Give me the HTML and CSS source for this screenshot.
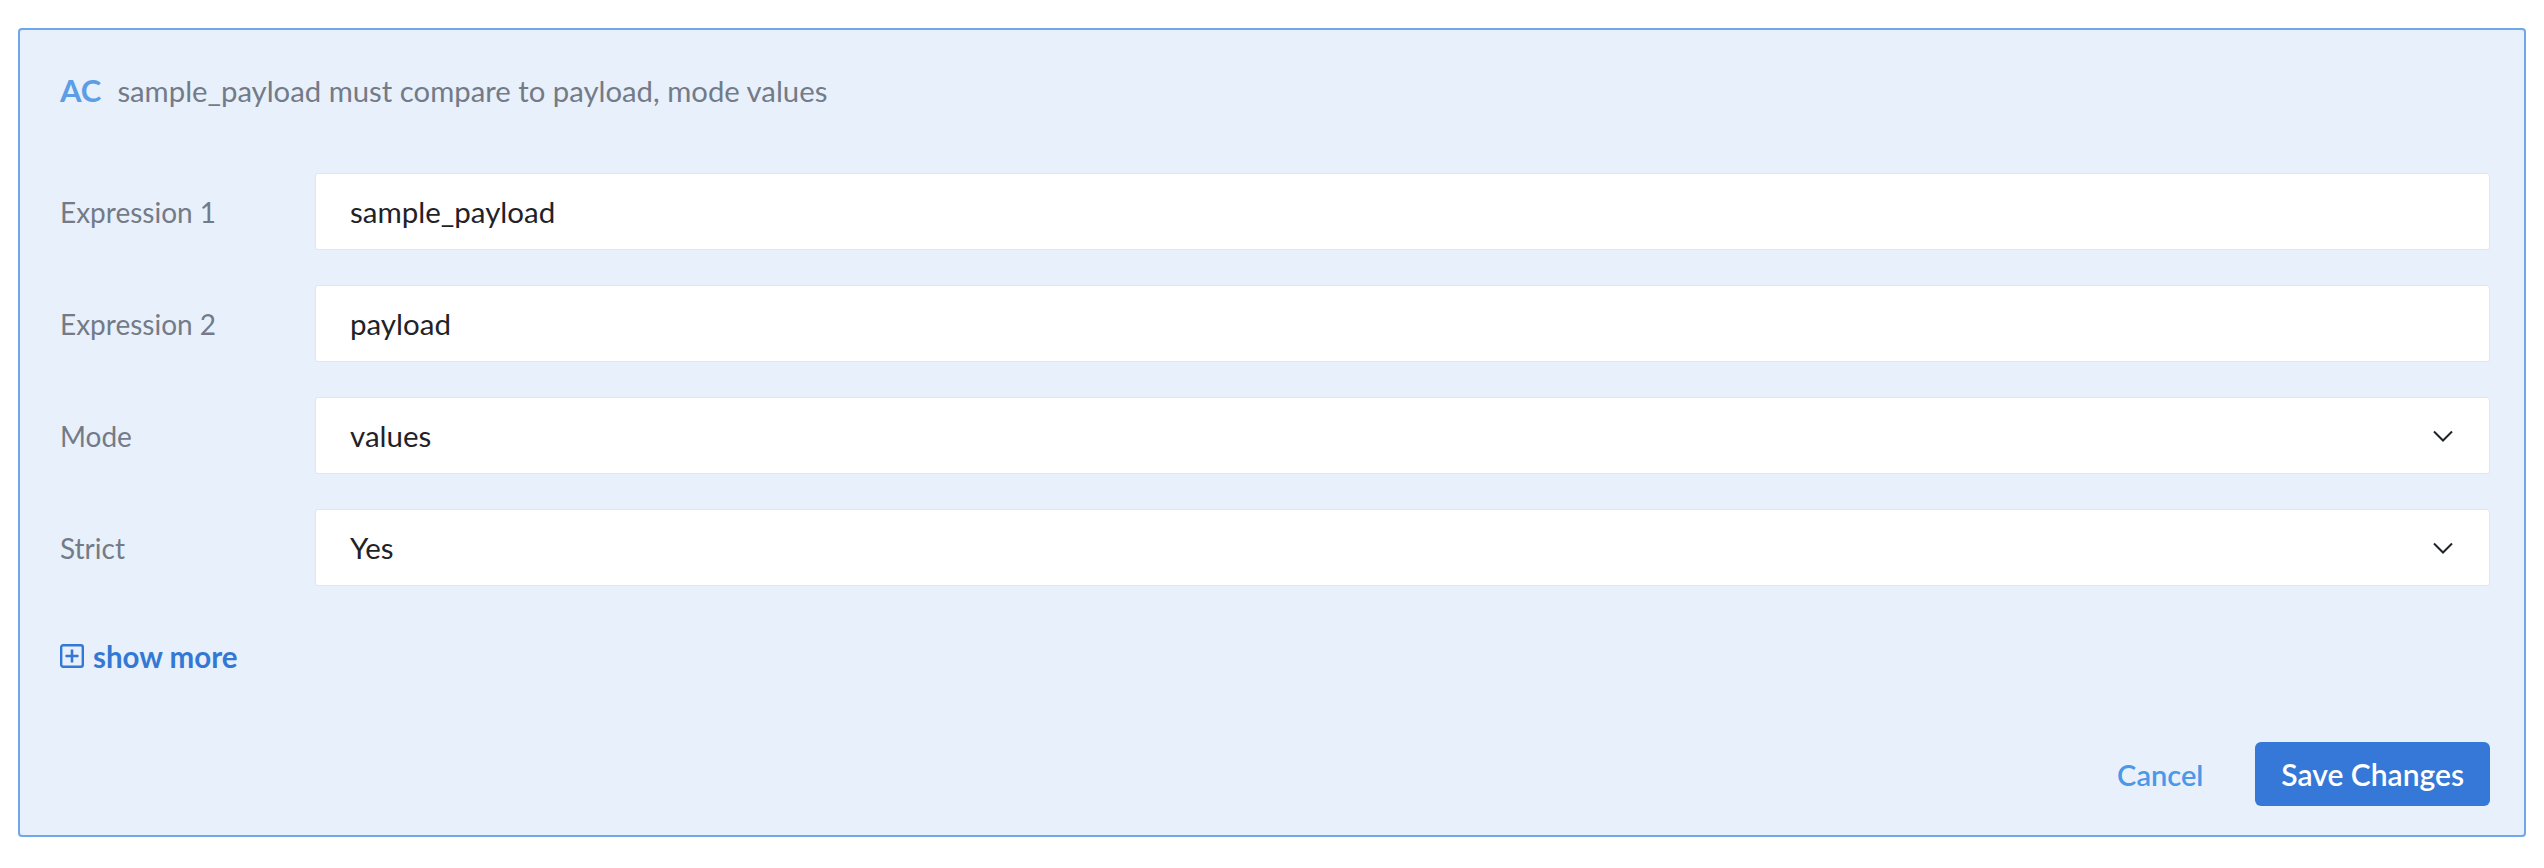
FILE: index.html
```html
<!DOCTYPE html>
<html lang="en">
<head>
    <meta charset="UTF-8">
    <meta name="viewport" content="width=device-width, initial-scale=1.0">
    <title>Assertion - Compare</title>
    <link rel="stylesheet" href="styles.css">
</head>
<body>
    <div class="assertion-panel">
        <div class="assertion-header">
            <span class="assertion-code">AC</span>
            <span class="assertion-summary">sample_payload must compare to payload, mode values</span>
        </div>

        <div class="form-rows">
            <div class="form-row">
                <label class="form-label" for="expr-1">Expression 1</label>
                <input class="form-field" id="expr-1" type="text" value="sample_payload">
            </div>
            <div class="form-row">
                <label class="form-label" for="expr-2">Expression 2</label>
                <input class="form-field" id="expr-2" type="text" value="payload">
            </div>
            <div class="form-row">
                <span class="form-label">Mode</span>
                <div class="form-field select-field">
                    <span>values</span>
                    <svg class="chevron" width="20" height="12" viewBox="0 0 20 12"><path d="M1 1.5l9 9 9-9" fill="none" stroke="#1f2328" stroke-width="2"/></svg>
                </div>
            </div>
            <div class="form-row">
                <span class="form-label">Strict</span>
                <div class="form-field select-field">
                    <span>Yes</span>
                    <svg class="chevron" width="20" height="12" viewBox="0 0 20 12"><path d="M1 1.5l9 9 9-9" fill="none" stroke="#1f2328" stroke-width="2"/></svg>
                </div>
            </div>
        </div>

        <a class="show-more" href="#">
            <svg class="plus-box" width="24" height="24" viewBox="0 0 24 24"><rect x="1.2" y="1.2" width="21.6" height="21.6" rx="2" fill="none" stroke="#3478d6" stroke-width="2.4"/><path d="M12 5.5v13M5.5 12h13" stroke="#3478d6" stroke-width="2.6"/></svg>
            show more
        </a>

        <div class="panel-actions">
            <button class="btn-link" type="button">Cancel</button>
            <button class="btn-primary" type="button">Save Changes</button>
        </div>
    </div>
</body>
</html>
```

FILE: styles.css
```css
body {
    font-family: Lato, "Liberation Sans", sans-serif;
    background-color: #ffffff;
    margin: 0;
    padding: 28px 18px 0;
}
.assertion-panel {
    background-color: #e8f0fb;
    border: 2px solid #6ea7ea;
    border-radius: 4px;
    padding: 40px 34px 29px 40px;
}
.assertion-header {
    display: flex;
    align-items: baseline;
    gap: 16px;
    height: 40px;
    line-height: 40px;
}
.assertion-code {
    font-size: 31px;
    font-weight: 700;
    color: #5b9ee6;
}
.assertion-summary {
    font-size: 29.3px;
    color: #737b88;
}
.form-rows {
    display: flex;
    flex-direction: column;
    gap: 35px;
    margin-top: 63px;
}
.form-row {
    display: flex;
    align-items: center;
}
.form-label {
    flex: 0 0 255px;
    font-size: 28px;
    color: #737b88;
}
.form-field {
    flex: 1;
    box-sizing: border-box;
    height: 77px;
    padding: 0 36px 0 34px;
    background-color: #ffffff;
    border: 1px solid #e1e5ec;
    border-radius: 3px;
    font-family: inherit;
    font-size: 29.5px;
    color: #1f2328;
    outline: none;
}
.select-field {
    display: flex;
    align-items: center;
    justify-content: space-between;
}
.show-more {
    display: flex;
    align-items: center;
    gap: 9px;
    width: max-content;
    margin-top: 58px;
    height: 24px;
    font-size: 29.5px;
    font-weight: 700;
    color: #3478d6;
    text-decoration: none;
}
.panel-actions {
    display: flex;
    justify-content: flex-end;
    align-items: center;
    gap: 52px;
    margin-top: 74px;
}
.btn-link {
    background: none;
    border: none;
    padding: 0;
    font-family: inherit;
    font-size: 29px;
    font-weight: 600;
    color: #4a98e8;
    cursor: pointer;
}
.btn-primary {
    height: 64px;
    padding: 0 26px;
    background-color: #3578d8;
    color: #ffffff;
    border: none;
    border-radius: 6px;
    font-family: inherit;
    font-size: 30px;
    font-weight: 600;
    cursor: pointer;
}
```
